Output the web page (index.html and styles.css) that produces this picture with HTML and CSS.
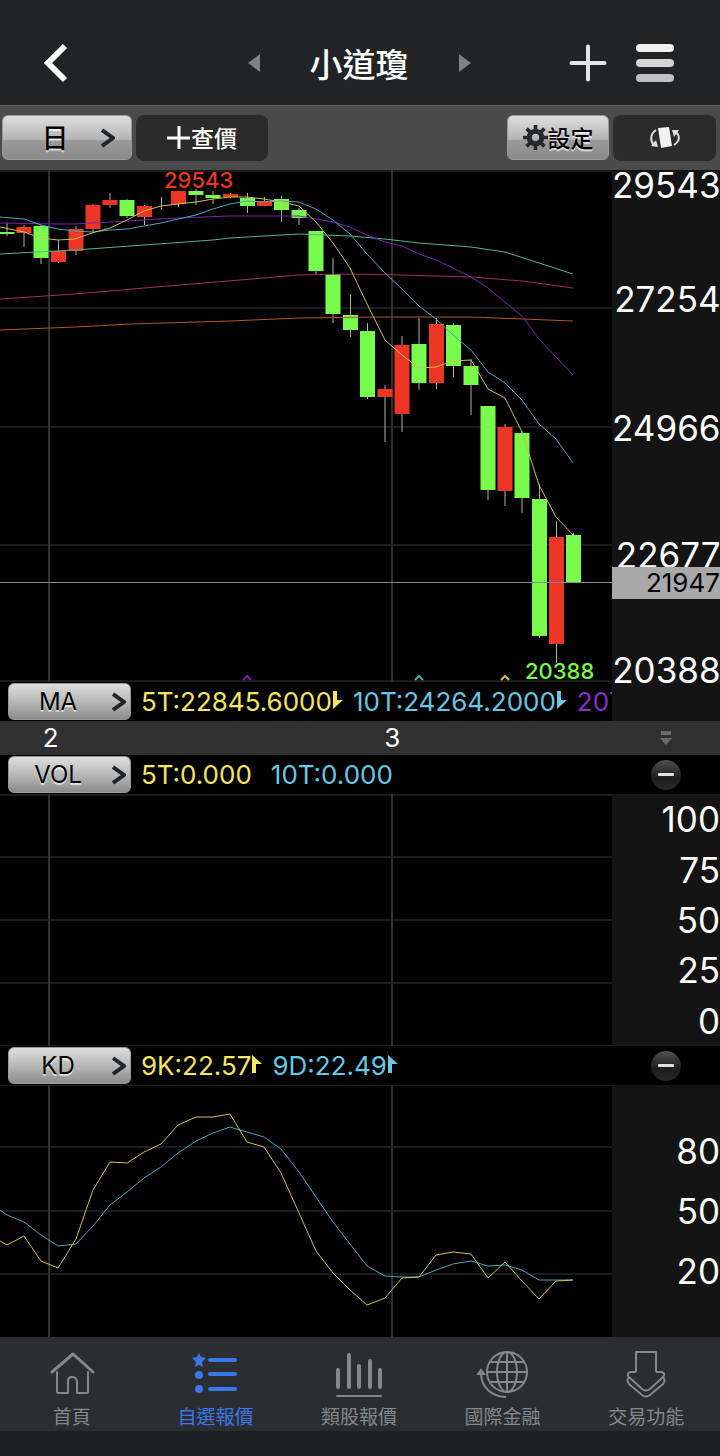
FILE: index.html
```html
<!DOCTYPE html>
<html lang="zh-Hant">
<head>
  <meta charset="UTF-8" />
  <meta name="viewport" content="width=device-width, initial-scale=1.0" />
  <title>小道瓊</title>
  <link rel="stylesheet" href="styles.css">
</head>
<body>
  <header class="header">
    <button class="icon-btn back" aria-label="返回">
      <svg width="24" height="40" viewBox="0 0 24 40"><path d="M21 3L4 20l17 17" fill="none" stroke="#fff" stroke-width="6"/></svg>
    </button>
    <div class="title">
      <button class="icon-btn" aria-label="上一個">
        <svg width="12" height="18" viewBox="0 0 12 18"><path d="M12 0v18L0 9z" fill="#7d8284"/></svg>
      </button>
      <h1>小道瓊</h1>
      <button class="icon-btn" aria-label="下一個">
        <svg width="12" height="18" viewBox="0 0 12 18"><path d="M0 0v18l12-9z" fill="#7d8284"/></svg>
      </button>
    </div>
    <div class="header-actions">
      <button class="icon-btn" aria-label="新增">
        <svg width="38" height="38" viewBox="0 0 38 38"><path d="M19 2.500v33M2.500 19h33" stroke="#e4e4e6" stroke-width="4" stroke-linecap="round"/></svg>
      </button>
      <button class="icon-btn" aria-label="選單">
        <svg width="38" height="40" viewBox="0 0 38 40">
          <rect y="1" width="38" height="8" rx="4" fill="#eeeeec"/>
          <rect y="16" width="38" height="8" rx="4" fill="#d4d4d6"/>
          <rect y="31" width="38" height="8" rx="4" fill="#c0c0c2"/>
        </svg>
      </button>
    </div>
  </header>

  <div class="toolbar">
    <button class="tool light period">
      <span>日</span>
      <svg width="14" height="20" viewBox="0 0 14 20"><path d="M1 2l11 8-11 8" fill="none" stroke="#222629" stroke-width="4"/></svg>
    </button>
    <button class="tool dark query">
      <svg width="24" height="24" viewBox="0 0 24 24"><path d="M12 0v23M0 12h23" stroke="#fff" stroke-width="3"/></svg>
      <span>查價</span>
    </button>
    <button class="tool light settings">
      <svg width="25" height="25" viewBox="-12 -12 24 24">
        <circle r="6" fill="none" stroke="#26292b" stroke-width="5"/>
        <path d="M0-12v5M0 7v5M-12 0h5M7 0h5M-8.500-8.500l3.500 3.500M5 5l3.500 3.500M8.500-8.500L5-5M-5 5l-3.500 3.500" stroke="#26292b" stroke-width="3.500"/>
      </svg>
      <span>設定</span>
    </button>
    <button class="tool dark rotate" aria-label="旋轉">
      <svg width="32" height="24" viewBox="0 0 32 24">
        <path d="M9 2l11-1 3 19-11 2z" fill="#f2f2f2"/>
        <path d="M7 4C1 8 1 15 5 19M25 19c6-4 6-9 2-13" fill="none" stroke="#e0e0e0" stroke-width="2"/>
        <path d="M2 20l7 1-2-7zM23 4l7 0-5 7z" fill="#e0e0e0"/>
      </svg>
    </button>
  </div>

  <main>
    <section class="pane price">
      <svg class="plot" viewBox="0 0 612 512">
        <g class="grid-x"><path d="M0 138H612M0 257H612M0 375H612M0 511H612M0 1H612"/></g>
        <g class="grid-y"><path d="M49 0V512M392 0V512"/></g>

        <path class="wick" d="M7 53V66M24 55V77M41 55V94M58.500 70V93M76 56V85M93 34V63M110 23V38M127 29V48M144.500 35V55M161.500 27V40M178.500 21V37M196 19V35M213 21V34M230.500 23V28M247.500 23V43M264.500 27V36M281.500 26V52M299 38V55M316 61V105M333 88V153M350.500 124V167M367.500 153V229M385 215V272M402 166V262M419 148V220M436.500 148V219M453.500 153V207M471 189V245M488 236V330M505 254V336M522 261V343M539.500 314V468M556.500 351V493M573.500 363V366"/>
        <path class="body up" d="M24 57V63M58.500 81V92M76 59V81M93 35V59M110 30V35M144.500 36V47M178.500 21V34M230.500 24V27M264.500 31V36M385 219V227M402 175V244M436.500 154V213M505 257V321M556.500 367V474"/>
        <path class="body down" d="M7 62V64M41 56V88M127 30V46M196 21V25M213 25V28M247.500 28V36M281.500 29V40M299 40V48M316 61V101M333 104V144M350.500 145V160M367.500 161V227M419 174V213M453.500 155V196M471 196V215M488 236V320M522 263V328M539.500 329V466M573.500 365V412"/>

        <polyline class="line ma240" points="0,160 75,157 131,154 230,151 300,148 380,147 470,147 523,149 573,151"/>
        <polyline class="line ma120" points="0,129 75,124 144,118 240,110 299,105 350,104 402,105 471,107 522,111 573,118"/>
        <polyline class="line ma60" points="0,84 75,80 144,75 213,70 230,68 299,64 350,66 385,69 419,73 471,77 505,82 539,93 573,104"/>
        <polyline class="line ma20" points="0,53 58,54 75,54 110,52 144,50 178,48 230,46 299,46 316,49 333,52 350,57 367,65 385,72 402,76 419,84 436,90 453,98 471,107 488,118 505,132 522,146 539,169 556,187 573,205"/>
        <polyline class="line ma10" points="0,47 24,49 41,55 58,59 75,61 92,62 110,60 127,59 144,56 161,53 178,49 196,45 213,39 230,34 247,31 264,32 281,31 299,32 316,39 333,50 350,64 367,84 385,103 402,119 419,136 436,149 453,165 471,180 488,202 505,213 522,230 539,254 556,269 573,293"/>
        <polyline class="line ma5" points="0,57 24,62 41,68 58,70 75,69 92,63 110,58 127,50 144,41 161,36 178,34 196,32 213,29 230,27 247,27 264,29 281,32 299,36 316,52 333,73 350,98 367,134 385,170 402,185 419,198 436,197 453,191 471,190 488,219 505,228 522,262 539,315 556,347 573,365"/>

        <path class="last" d="M0 412.500H612"/>
        <text class="high" x="164" y="18">29543</text>
        <text class="low" x="525" y="509">20388</text>
        <path class="mark ma20" d="M243 510l4-4 4 4"/>
        <path class="mark ma10" d="M415 510l4-4 4 4"/>
        <path class="mark ma5" d="M501 510l4-4 4 4"/>
      </svg>
      <div class="legend">
        <button class="indicator"><span>MA</span><svg width="14" height="20" viewBox="0 0 14 20"><path d="M1 2l11 8-11 8" fill="none" stroke="#222629" stroke-width="4"/></svg></button>
        <span class="yellow">5T:22845.6000<svg class="flag" width="10" height="18" viewBox="0 0 10 18"><path d="M0 0h4v9h6L0 18z"/></svg></span>
        <span class="cyan">10T:24264.2000<svg class="flag" width="10" height="18" viewBox="0 0 10 18"><path d="M0 0h4v9h6L0 18z"/></svg></span>
        <span class="purple">20T</span>
      </div>
      <div class="axis price-axis">
        <span>29543</span>
        <span>27254</span>
        <span>24966</span>
        <span>22677</span>
        <span>20388</span>
        <b class="price-tag">21947</b>
      </div>
    </section>

    <div class="months">
      <div class="month-labels"><span>2</span><span>3</span></div>
      <button class="icon-btn" aria-label="展開">
        <svg width="12" height="16" viewBox="0 0 12 16"><path d="M1 1h10v4H1zM0 8h12l-6 7z" fill="#6c6c6c"/></svg>
      </button>
    </div>

    <section class="pane">
      <div class="legend">
        <button class="indicator"><span>VOL</span><svg width="14" height="20" viewBox="0 0 14 20"><path d="M1 2l11 8-11 8" fill="none" stroke="#222629" stroke-width="4"/></svg></button>
        <span class="yellow wide">5T:0.000</span>
        <span class="cyan">10T:0.000</span>
      </div>
      <div class="collapse"><button class="minus" aria-label="收合"></button></div>
      <svg class="plot" viewBox="0 0 612 252">
        <g class="grid-x"><path d="M0 1H612M0 63H612M0 126H612M0 189H612M0 252H612"/></g>
        <g class="grid-y"><path d="M49 0V252M392 0V252"/></g>
      </svg>
      <div class="axis even">
        <span>100</span>
        <span>75</span>
        <span>50</span>
        <span>25</span>
        <span>0</span>
      </div>
    </section>

    <section class="pane">
      <div class="legend">
        <button class="indicator"><span>KD</span><svg width="14" height="20" viewBox="0 0 14 20"><path d="M1 2l11 8-11 8" fill="none" stroke="#222629" stroke-width="4"/></svg></button>
        <span class="yellow">9K:22.57<svg class="flag" width="10" height="18" viewBox="0 0 10 18"><path d="M0 0l10 9H4v9H0z"/></svg></span>
        <span class="cyan">9D:22.49<svg class="flag" width="10" height="18" viewBox="0 0 10 18"><path d="M0 0l10 9H4v9H0z"/></svg></span>
      </div>
      <div class="collapse"><button class="minus" aria-label="收合"></button></div>
      <svg class="plot" viewBox="0 0 612 252">
        <g class="grid-x"><path d="M0 0H612M0 62H612M0 126H612M0 189H612"/></g>
        <g class="grid-y"><path d="M49 0V252M392 0V252"/></g>
        <polyline class="line ma10" points="0,125 7,130 24,137 41,150 58,161 76,159 93,141 110,120 127,107 144,93 161,82 178,68 196,56 213,48 230,42 247,47 264,52 281,64 299,87 316,112 333,137 350,159 367,181 385,191 402,192 419,192 436,185 453,179 471,176 488,181 505,180 522,185 539,195 573,195"/>
        <polyline class="line ma5" points="0,156 7,160 24,151 41,176 58,183 76,154 93,105 110,77 127,78 144,67 161,59 178,40 196,32 213,32 230,29 247,57 264,62 281,88 299,128 316,166 333,188 350,205 367,220 385,213 402,193 419,192 436,170 453,167 471,169 488,193 505,177 522,196 539,214 556,196 573,195"/>
      </svg>
      <div class="axis kd-axis">
        <span>80</span>
        <span>50</span>
        <span>20</span>
      </div>
    </section>
  </main>

  <nav class="tabs">
    <a href="#home">
      <svg width="48" height="48" viewBox="0 0 48 48" fill="none" stroke="currentColor" stroke-width="2" stroke-linecap="round" stroke-linejoin="round">
        <path stroke-width="3" d="M4 22L25 4l20 18"/>
        <path d="M9 22v20q0 1 1 1h10V31q0-4 4-4t5 4v12h10q1 0 1-1V22"/>
      </svg>
      首頁
    </a>
    <a href="#watchlist" class="active">
      <svg width="48" height="48" viewBox="0 0 48 48" fill="currentColor">
        <path d="M8 3l2 4 5 1-4 4 1 5-4-2-4 2 1-5-4-4 5-1z"/>
        <circle cx="8" cy="25" r="4"/><circle cx="8" cy="39" r="4"/>
        <path d="M19 10h25M19 24h25M19 39h25" stroke="currentColor" stroke-width="4" stroke-linecap="round"/>
      </svg>
      自選報價
    </a>
    <a href="#sector">
      <svg width="48" height="48" viewBox="0 0 48 48" fill="none" stroke="currentColor" stroke-linecap="round">
        <path stroke-width="4" d="M3 20v17M14 5v32M24 16v21M35 11v26M45 20v17"/>
        <path stroke-width="2" d="M2 46h44"/>
      </svg>
      類股報價
    </a>
    <a href="#world">
      <svg width="52" height="48" viewBox="0 0 52 48" fill="none" stroke="currentColor" stroke-width="2">
        <circle cx="30" cy="22" r="20"/>
        <ellipse cx="30" cy="22" rx="10" ry="20"/>
        <path d="M30 2v40M10 22h40M13 12h34M13 32h34M4 23c0 14 11 24 25 24"/>
        <path d="M1 24l3-4 3 4z" fill="currentColor"/>
      </svg>
      國際金融
    </a>
    <a href="#trade">
      <svg width="48" height="48" viewBox="0 0 48 48" fill="none" stroke="currentColor" stroke-width="2" stroke-linejoin="round">
        <path d="M14 2h20v19q0 1 1 1h5q4 2 1 5L28 39q-4 3-8 0L7 27q-3-3 1-5h5q1 0 1-1z"/>
        <path d="M7 27q-3 3 0 7l13 11q4 3 8 0l13-11q3-4 0-7"/>
      </svg>
      交易功能
    </a>
  </nav>
</body>
</html>
```
FILE: styles.css
```css
:root {
  --bg: #212325;
  --yellow: #f5e663;
  --cyan: #6ac6e2;
  --purple: #8a2fc9;
  --up: #eb3626;
  --down: #78fb4c;
  --axis-bg: #141414;
  --axis-width: 108px;
  --cjk: "Noto Sans CJK TC", sans-serif;
}

* {
  box-sizing: border-box;
}

body {
  margin: 0;
  min-height: 100vh;
  background: #1c2024;
  color: #fff;
  font-family: Inter, "Noto Sans CJK TC", sans-serif;
}

button {
  font-family: inherit;
  color: inherit;
  border: none;
  padding: 0;
  cursor: pointer;
}

svg {
  display: block;
  flex-shrink: 0;
}

.icon-btn {
  background: none;
}

/* header */
.header {
  display: grid;
  grid-template-columns: 1fr auto 1fr;
  align-items: center;
  height: 105px;
  padding: 20px 46px 0 44px;
  background: var(--bg);
}

.back {
  justify-self: start;
}

.title {
  display: flex;
  align-items: center;
  gap: 50px;
}

.title h1 {
  margin: 0;
  font: 500 33px/38px var(--cjk);
}

.header-actions {
  display: flex;
  align-items: center;
  justify-self: end;
  gap: 29px;
}

/* toolbar */
.toolbar {
  display: flex;
  gap: 4px;
  height: 65px;
  padding: 9px 4px 9px 2px;
  background: #4a4a4a;
  border-top: 1px solid #606060;
}

.tool {
  display: flex;
  align-items: center;
  justify-content: center;
  height: 46px;
  border-radius: 8px;
  font: 500 23px/30px var(--cjk);
}

.tool span {
  padding-bottom: 2px;
}

.light,
.indicator {
  color: #000;
  background: linear-gradient(#dedede, #b4b4b4 55%, #8c8c8c);
  border: 1px solid #9a9a9a;
  text-shadow: 0 2px 1px rgba(255, 255, 255, 0.7);
}

.light {
  height: 45px;
  border-radius: 6px;
  background: linear-gradient(#dedede, #b4b4b4 55%, #9a9a9a 55%, #8a8a8a);
}

.dark {
  background: #2b2b2b;
}

.period {
  width: 130px;
  padding-left: 22px;
  gap: 32px;
  font-size: 27px;
}

.query {
  width: 132px;
}

.settings {
  width: 102px;
  margin-left: auto;
}

.rotate {
  width: 103px;
}

/* chart panes */
.pane {
  display: grid;
  grid-template-columns: minmax(0, 1fr) var(--axis-width);
  background: #000;
}

.plot {
  width: 100%;
  height: auto;
}

.grid-x {
  stroke: #1c1c1c;
  stroke-width: 2;
}

.grid-y {
  stroke: #303030;
  stroke-width: 2;
}

.wick {
  stroke: #b0b0b0;
}

.body {
  stroke-width: 15;
}

.up { stroke: var(--up); }
.down { stroke: var(--down); }

.line,
.mark {
  fill: none;
  stroke-width: 1;
}

.mark {
  stroke-width: 2;
}

.ma5 { stroke: #cfc053; }
.ma10 { stroke: #4fa3bb; }
.ma20 { stroke: #7a22ae; }
.ma60 { stroke: #56b58c; }
.ma120 { stroke: #a52c66; }
.ma240 { stroke: #b1582c; }

.last {
  stroke: #8a8a8a;
}

.high,
.low {
  font-size: 22px;
  font-weight: 500;
}

.high { fill: var(--up); }
.low { fill: var(--down); }

.legend {
  display: flex;
  align-items: center;
  gap: 10px;
  height: 39px;
  padding-left: 8px;
  overflow: hidden;
  background: #000;
  font-size: 26px;
  line-height: 36px;
  white-space: nowrap;
}

.legend span {
  display: flex;
  align-items: center;
}

.yellow { color: var(--yellow); fill: var(--yellow); }
.cyan { color: var(--cyan); fill: var(--cyan); }
.purple { color: var(--purple); }

.wide {
  margin-right: 9px;
}

.flag {
  margin: 0 0 4px 1px;
}

.indicator {
  display: flex;
  align-items: center;
  flex-shrink: 0;
  width: 123px;
  height: 37px;
  padding-right: 4px;
  border-radius: 6px;
  font-size: 24px;
}

.indicator span {
  flex: 1;
  justify-content: center;
  padding-right: 5px;
}

/* value axis */
.axis {
  position: relative;
  background: var(--axis-bg);
  font-size: 35px;
  line-height: 30px;
  text-align: right;
}

.price-axis {
  display: grid;
  grid-area: 1 / 2 / 3 / 3;
  grid-template-rows: 114fr 129fr 127fr 115fr 66fr;
}

.price-tag {
  position: absolute;
  top: 72%;
  left: 0;
  right: 0;
  background: #a9a9a9;
  color: #000;
  font-size: 26px;
  font-weight: 400;
  line-height: 32px;
}

.even {
  display: flex;
  flex-direction: column;
  justify-content: space-around;
}

.kd-axis {
  display: flex;
  flex-direction: column;
  justify-content: center;
  gap: 30px;
}

.months {
  display: grid;
  grid-template-columns: minmax(0, 1fr) var(--axis-width);
  height: 34px;
  background: #303030;
  font-size: 26px;
  line-height: 34px;
}

.month-labels {
  display: grid;
  grid-template-columns: 60% 1fr;
  padding-left: 7%;
}

.months .icon-btn {
  justify-self: center;
}

.collapse {
  display: flex;
  align-items: center;
  justify-content: center;
}

.minus {
  display: flex;
  align-items: center;
  justify-content: center;
  width: 30px;
  height: 30px;
  border-radius: 50%;
  background: linear-gradient(#505050, #1c1c1c 60%, #2a2a2a);
}

.minus::before {
  content: '';
  width: 16px;
  height: 3px;
  border-radius: 1px;
  background: #e0e0e0;
}

/* bottom tabs */
.tabs {
  display: grid;
  grid-template-columns: repeat(5, 1fr);
  height: 94px;
  padding: 13px 2px 0 0;
  background: #2a2d32;
}

.tabs a {
  display: flex;
  flex-direction: column;
  align-items: center;
  gap: 4px;
  color: #85878a;
  font: 400 19px/28px var(--cjk);
  text-decoration: none;
}

.tabs .active {
  color: #3b78e7;
}
```
